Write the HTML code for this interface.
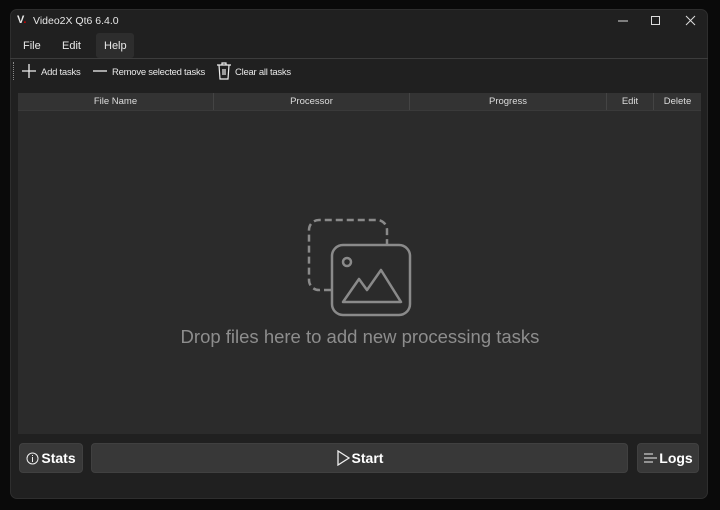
<!DOCTYPE html>
<html><head><style>
body{margin:0;width:720px;height:510px;background:#0a0a0a;font-family:"Liberation Sans",sans-serif;overflow:hidden;position:relative}
.win{position:absolute;left:10px;top:9px;width:698px;height:490px;background:#202020;border-radius:7px;border:1px solid #2e2e2e;box-sizing:border-box}
.t{position:absolute;color:#e8e8e8;font-size:11px;white-space:nowrap}
.tb{font-size:9.5px;letter-spacing:-0.25px;top:67px}
.hdr{position:absolute;left:18px;top:93px;width:683px;height:17px;background:#333;border-bottom:1px solid #3a3a3a}
.hc{position:absolute;top:0;height:17px;line-height:18px;text-align:center;color:#ddd;font-size:9.5px;border-right:1px solid #444;box-sizing:border-box}
.body{position:absolute;left:18px;top:111px;width:683px;height:323px;background:#2b2b2b}
.btn{position:absolute;top:443px;height:30px;background:#383838;border-radius:4px;border:1px solid #404040;box-sizing:border-box;color:#fff;font-weight:bold;font-size:14px;display:flex;align-items:center;justify-content:center;gap:2px}
</style></head><body>
<div class="win"></div>
<div class="t" style="left:17px;top:14px;font-weight:bold;font-size:11px">V<span style="color:#c00">.</span></div>
<div class="t" style="left:33px;top:15px;font-size:10.5px">Video2X Qt6 6.4.0</div>
<svg style="position:absolute;left:614px;top:14px" width="90" height="14"><line x1="4" y1="7" x2="14" y2="7" stroke="#ddd"/><rect x="37.5" y="2.5" width="8" height="8" fill="none" stroke="#ddd"/><path d="M72 2 L81 11 M81 2 L72 11" stroke="#ddd"/></svg>
<div style="position:absolute;left:96px;top:33px;width:38px;height:25px;background:#2d2d2d;border-radius:3px"></div>
<div class="t" style="left:23px;top:40px">File</div>
<div class="t" style="left:62px;top:40px">Edit</div>
<div class="t" style="left:104px;top:40px">Help</div>
<div style="position:absolute;left:10px;top:58px;width:698px;height:1px;background:#3c3c3c"></div>
<div style="position:absolute;left:13px;top:62px;width:1px;height:18px;border-left:1px dotted #888"></div>
<svg style="position:absolute;left:22px;top:64px" width="14" height="14"><path d="M7 0V14M0 7H14" stroke="#eee" stroke-width="1.3"/></svg>
<div class="t tb" style="left:41px">Add tasks</div>
<svg style="position:absolute;left:93px;top:64px" width="14" height="14"><path d="M0 7H14" stroke="#eee" stroke-width="1.3"/></svg>
<div class="t tb" style="left:112px">Remove selected tasks</div>
<svg style="position:absolute;left:216px;top:62px" width="16" height="18"><path d="M1 3H15M6 3V1H10V3M3 3L4 17H12L13 3M7 7V13M9 7V13" stroke="#eee" fill="none" stroke-width="1.2"/></svg>
<div class="t tb" style="left:235px">Clear all tasks</div>
<div class="hdr">
<div class="hc" style="left:0;width:196px">File Name</div>
<div class="hc" style="left:196px;width:196px">Processor</div>
<div class="hc" style="left:392px;width:197px">Progress</div>
<div class="hc" style="left:589px;width:47px">Edit</div>
<div class="hc" style="left:636px;width:47px;border:none">Delete</div>
</div>
<div class="body"></div>
<svg style="position:absolute;left:306px;top:218px" width="108" height="100" fill="none" stroke="#8a8a8a" stroke-width="2.5">
<path d="M25 72H14A10 10 0 0 1 3 62V12A10 10 0 0 1 13 2H71A10 10 0 0 1 81 12V26" stroke-dasharray="7 4"/>
<rect x="26" y="27" width="78" height="70" rx="11"/>
<circle cx="41" cy="44" r="4"/>
<path d="M37 84L53 61L61 72L75 52L95 84Z" stroke-linejoin="round"/>
</svg>
<div class="t" style="left:0;width:720px;text-align:center;top:326px;font-size:18.5px;color:#8d8d8d">Drop files here to add new processing tasks</div>
<div class="btn" style="left:19px;width:64px"><svg width="13" height="13"><circle cx="6.5" cy="6.5" r="5.5" stroke="#eee" fill="none"/><path d="M6.5 5V10M6.5 3V4" stroke="#eee"/></svg>Stats</div>
<div class="btn" style="left:91px;width:537px"><svg width="14" height="16"><path d="M2 1L13 8L2 15Z" stroke="#eee" fill="none" stroke-width="1.3"/></svg>Start</div>
<div class="btn" style="left:637px;width:62px"><svg width="14" height="13"><path d="M1 2H10M1 6H14M1 10H10" stroke="#eee"/></svg>Logs</div>
</body></html>
